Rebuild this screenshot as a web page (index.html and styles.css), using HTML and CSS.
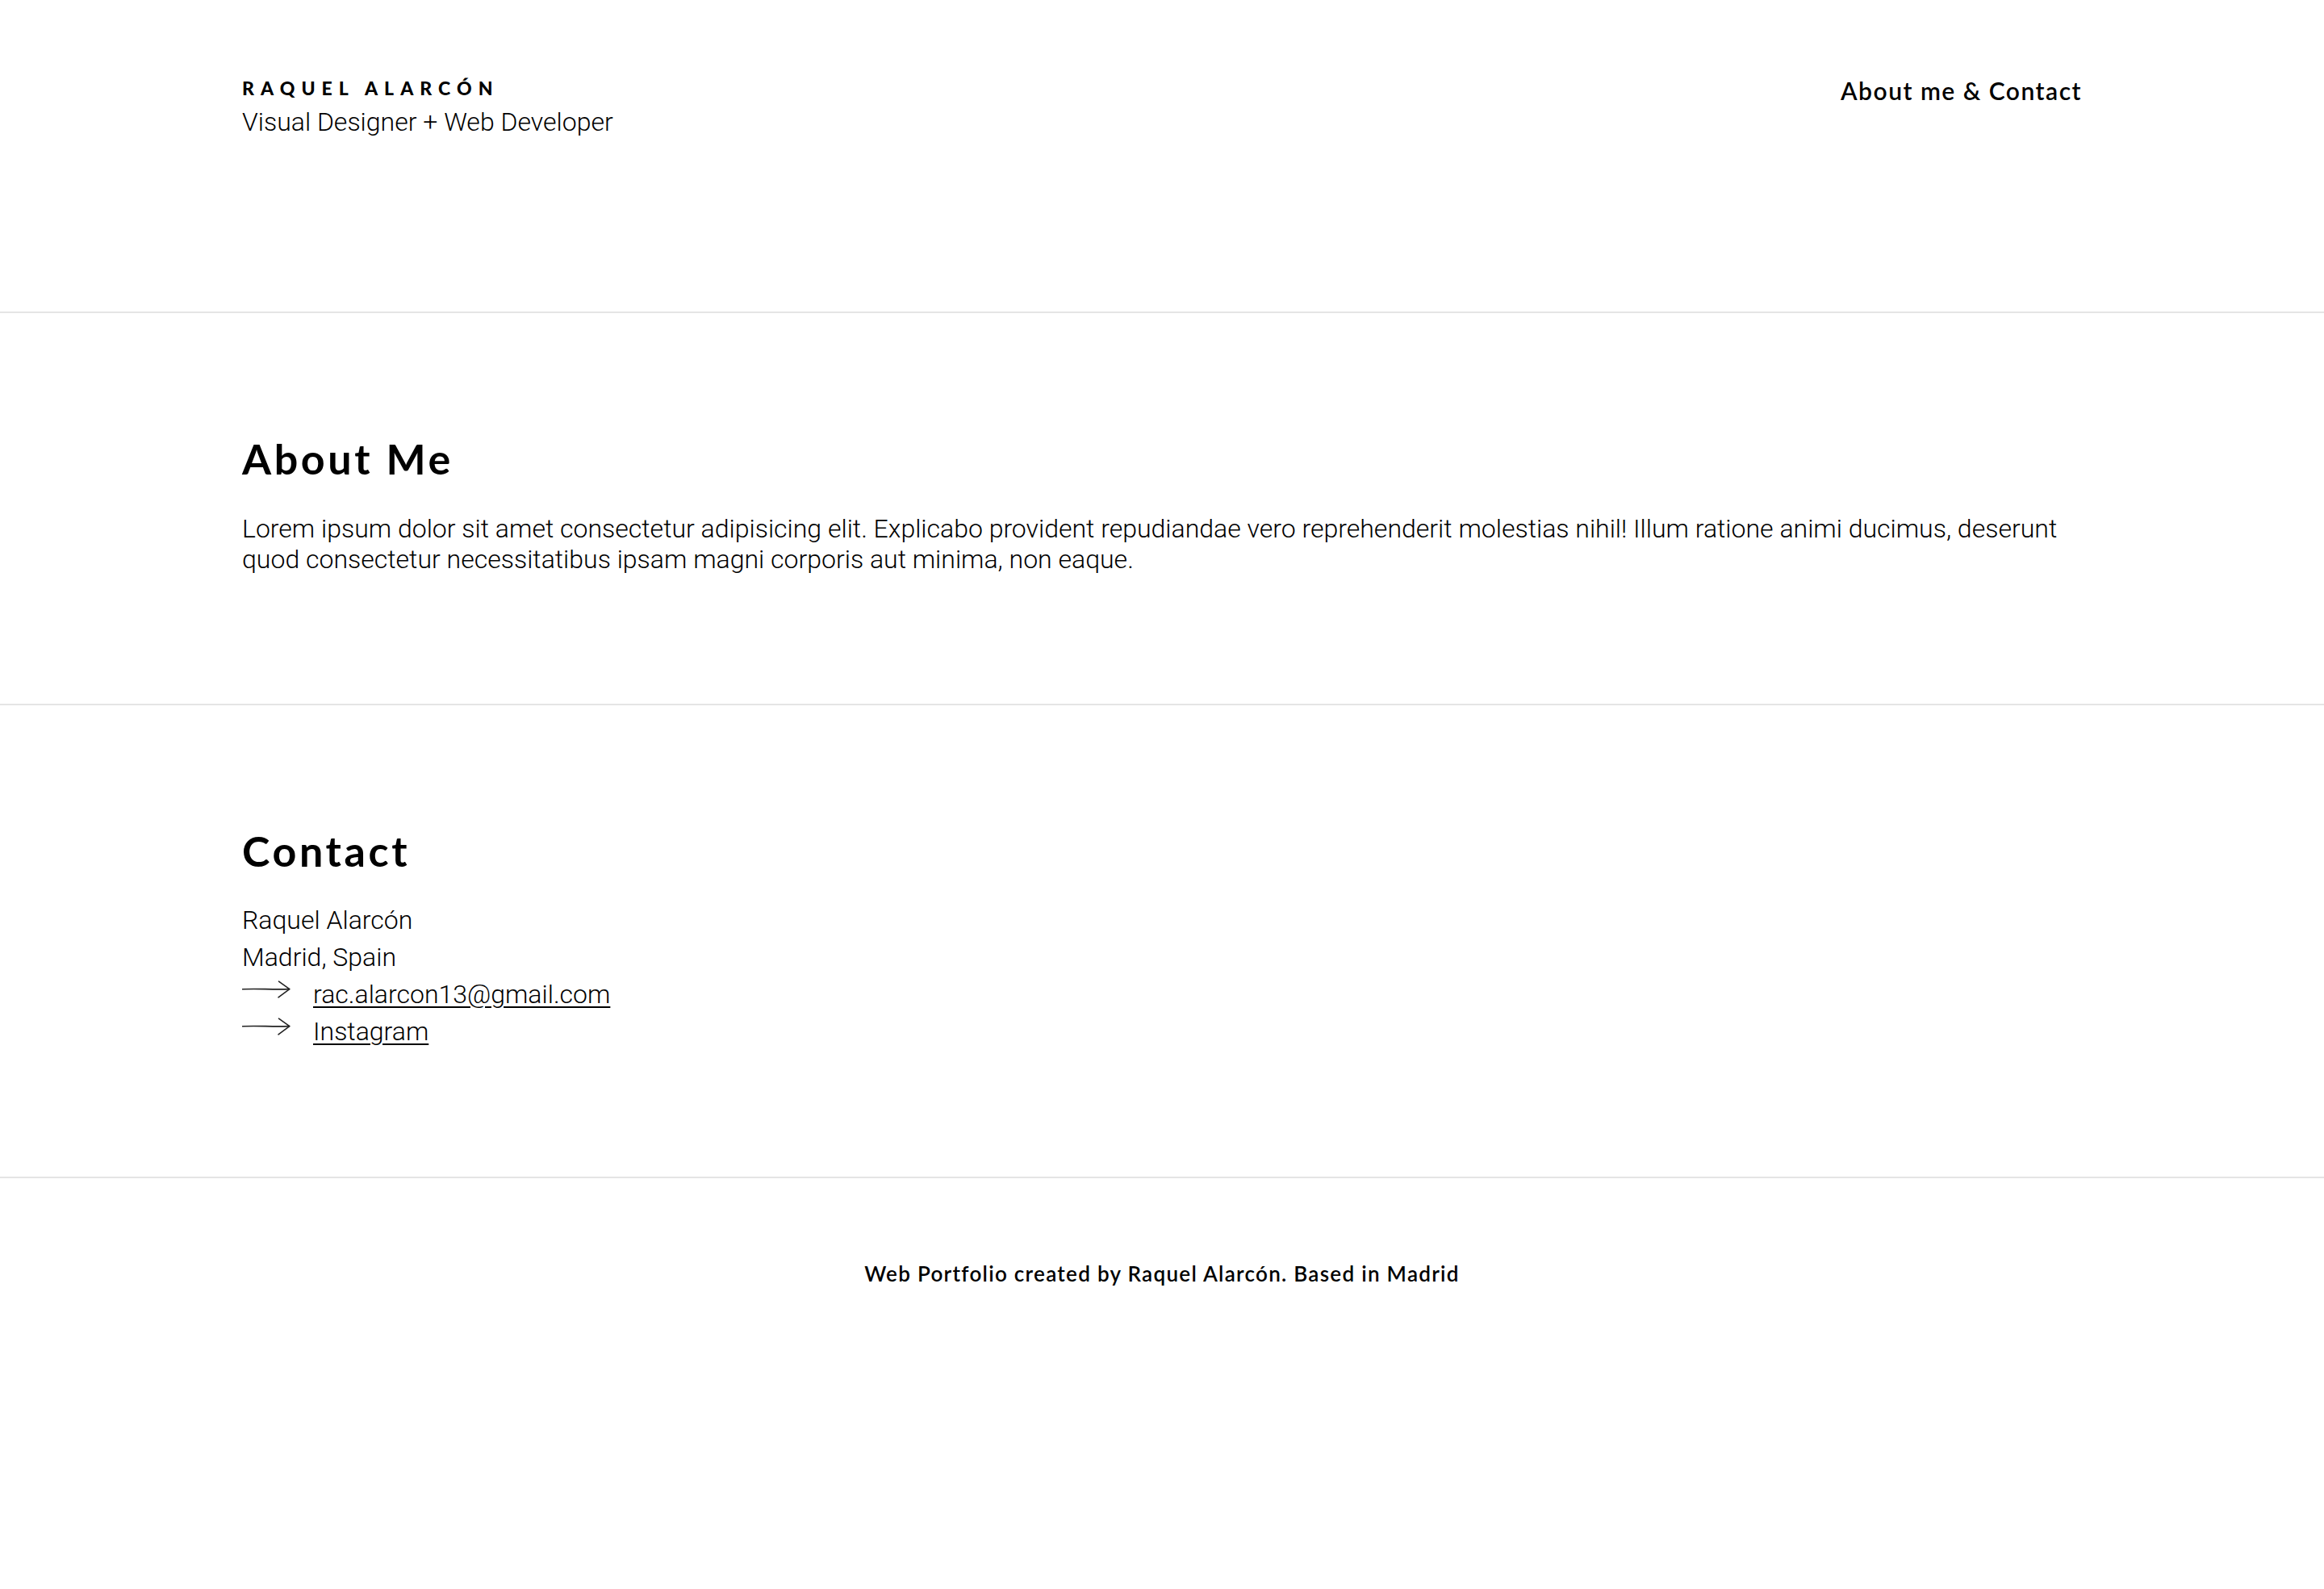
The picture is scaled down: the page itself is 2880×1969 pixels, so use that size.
FILE: index.html
```html
<!DOCTYPE html>
<html lang="es">
<head>
<meta charset="utf-8">
<title>Raquel Alarcón — Portfolio</title>
<link rel="stylesheet" href="styles.css">
</head>
<body>
<header class="site-header">
  <div class="brand">
    <div class="brand-name">RAQUEL ALARCÓN</div>
    <div class="brand-role">Visual Designer + Web Developer</div>
  </div>
  <nav class="nav">
    <a class="nav-link" href="#about">About me &amp; Contact</a>
  </nav>
</header>

<main>
  <section class="section section-about" id="about">
    <h2 class="section-title">About Me</h2>
    <p class="about-text">Lorem ipsum dolor sit amet consectetur adipisicing elit. Explicabo provident repudiandae vero reprehenderit molestias nihil! Illum ratione animi ducimus, deserunt quod consectetur necessitatibus ipsam magni corporis aut minima, non eaque.</p>
  </section>

  <section class="section section-contact" id="contact">
    <h2 class="section-title">Contact</h2>
    <ul class="contact-list">
      <li class="contact-line">Raquel Alarcón</li>
      <li class="contact-line">Madrid, Spain</li>
      <li class="contact-line">
        <svg class="arrow" viewBox="0 0 60 24" width="60" height="24" aria-hidden="true"><path d="M0.5 11.8 C 18 10.6, 38 12.6, 58.5 11.6" /><path d="M45.5 2.2 L58.8 11.6 L45 21.8" /></svg>
        <a class="contact-link" href="mailto:rac.alarcon13@gmail.com">rac.alarcon13@gmail.com</a>
      </li>
      <li class="contact-line">
        <svg class="arrow" viewBox="0 0 60 24" width="60" height="24" aria-hidden="true"><path d="M0.5 11.8 C 18 10.6, 38 12.6, 58.5 11.6" /><path d="M45.5 2.2 L58.8 11.6 L45 21.8" /></svg>
        <a class="contact-link" href="#">Instagram</a>
      </li>
    </ul>
  </section>
</main>

<footer class="site-footer">
  <p class="footer-text">Web Portfolio created by Raquel Alarcón. Based in Madrid</p>
</footer>
</body>
</html>
```

FILE: styles.css
```css
* {
  box-sizing: border-box;
}

html, body {
  margin: 0;
  padding: 0;
  background: #ffffff;
}

body {
  color: #000000;
  font-family: Roboto, "Liberation Sans", sans-serif;
  font-weight: 300;
  font-size: 32px;
}

.site-header {
  height: 386px;
  padding: 92px 300px 0;
  display: flex;
  justify-content: space-between;
  align-items: flex-start;
}

.brand {
  padding-top: 2px;
}

.brand-name {
  font-family: Lato, "Liberation Sans", sans-serif;
  font-weight: 900;
  font-size: 23px;
  line-height: 30px;
  letter-spacing: 0.35em;
}

.brand-role {
  margin-top: 8px;
  font-size: 32px;
  line-height: 38px;
}

.nav {
  margin-top: 2px;
}

.nav-link {
  font-family: Lato, "Liberation Sans", sans-serif;
  font-weight: 600;
  font-size: 30px;
  line-height: 36px;
  letter-spacing: 0.05em;
  color: #000000;
  text-decoration: none;
}

.section {
  border-top: 2px solid #e5e5e5;
  padding: 149px 300px 0;
}

.section-about {
  padding-bottom: 160px;
}

.section-contact {
  padding-bottom: 157px;
}

.section-title {
  margin: 0;
  font-family: Lato, "Liberation Sans", sans-serif;
  font-weight: 700;
  font-size: 52px;
  line-height: 1.2;
  letter-spacing: 0.07em;
}

.about-text {
  margin: 37px 0 0;
  font-size: 32px;
  line-height: 38px;
}

.contact-list {
  list-style: none;
  margin: 31px 0 0;
  padding: 0;
}

.contact-line {
  display: flex;
  align-items: center;
  height: 46px;
  line-height: 46px;
}

.arrow {
  flex: none;
  margin-right: 28px;
  margin-bottom: 12px;
  fill: none;
  stroke: #222222;
  stroke-width: 1.6;
  stroke-linecap: round;
  stroke-linejoin: round;
}

.contact-link {
  color: #000000;
  text-decoration: underline;
  text-decoration-thickness: 2px;
  text-underline-offset: 4px;
}

.site-footer {
  border-top: 2px solid #e5e5e5;
  padding-top: 103px;
  text-align: center;
}

.footer-text {
  margin: 0;
  font-family: Lato, "Liberation Sans", sans-serif;
  font-weight: 600;
  font-size: 26px;
  line-height: 30px;
  letter-spacing: 0.05em;
}
```
